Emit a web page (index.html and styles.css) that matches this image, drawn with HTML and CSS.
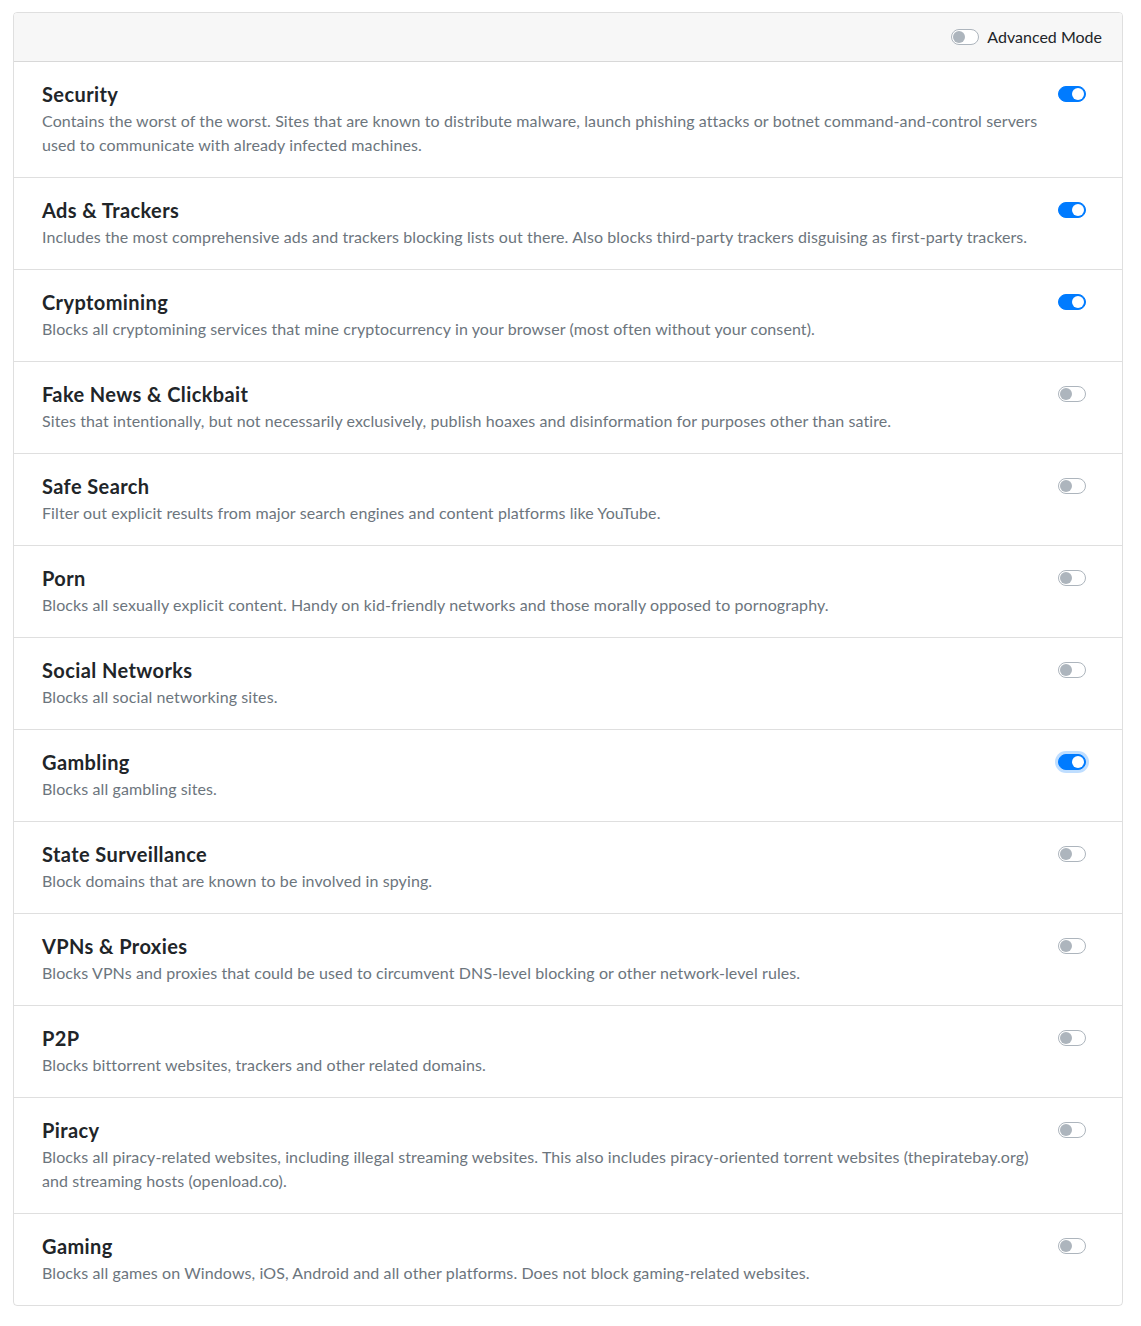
FILE: index.html
```html
<!DOCTYPE html>
<html>
<head>
<meta charset="utf-8">
<link rel="stylesheet" href="styles.css">
</head>
<body>
<div class="page">
  <div class="card">
    <div class="card-header">
      <span class="switch"></span>
      <span class="adv-label">Advanced Mode</span>
    </div>
    <div class="row">
      <div class="text">
        <div class="title">Security</div>
        <div class="desc">Contains the worst of the worst. Sites that are known to distribute malware, launch phishing attacks or botnet command-and-control servers used to communicate with already infected machines.</div>
      </div>
      <span class="switch on"></span>
    </div>
    <div class="row">
      <div class="text">
        <div class="title">Ads &amp; Trackers</div>
        <div class="desc">Includes the most comprehensive ads and trackers blocking lists out there. Also blocks third-party trackers disguising as first-party trackers.</div>
      </div>
      <span class="switch on"></span>
    </div>
    <div class="row">
      <div class="text">
        <div class="title">Cryptomining</div>
        <div class="desc">Blocks all cryptomining services that mine cryptocurrency in your browser (most often without your consent).</div>
      </div>
      <span class="switch on"></span>
    </div>
    <div class="row">
      <div class="text">
        <div class="title">Fake News &amp; Clickbait</div>
        <div class="desc">Sites that intentionally, but not necessarily exclusively, publish hoaxes and disinformation for purposes other than satire.</div>
      </div>
      <span class="switch"></span>
    </div>
    <div class="row">
      <div class="text">
        <div class="title">Safe Search</div>
        <div class="desc">Filter out explicit results from major search engines and content platforms like YouTube.</div>
      </div>
      <span class="switch"></span>
    </div>
    <div class="row">
      <div class="text">
        <div class="title">Porn</div>
        <div class="desc">Blocks all sexually explicit content. Handy on kid-friendly networks and those morally opposed to pornography.</div>
      </div>
      <span class="switch"></span>
    </div>
    <div class="row">
      <div class="text">
        <div class="title">Social Networks</div>
        <div class="desc">Blocks all social networking sites.</div>
      </div>
      <span class="switch"></span>
    </div>
    <div class="row">
      <div class="text">
        <div class="title">Gambling</div>
        <div class="desc">Blocks all gambling sites.</div>
      </div>
      <span class="switch on focus"></span>
    </div>
    <div class="row">
      <div class="text">
        <div class="title">State Surveillance</div>
        <div class="desc">Block domains that are known to be involved in spying.</div>
      </div>
      <span class="switch"></span>
    </div>
    <div class="row">
      <div class="text">
        <div class="title">VPNs &amp; Proxies</div>
        <div class="desc">Blocks VPNs and proxies that could be used to circumvent DNS-level blocking or other network-level rules.</div>
      </div>
      <span class="switch"></span>
    </div>
    <div class="row">
      <div class="text">
        <div class="title">P2P</div>
        <div class="desc">Blocks bittorrent websites, trackers and other related domains.</div>
      </div>
      <span class="switch"></span>
    </div>
    <div class="row">
      <div class="text">
        <div class="title">Piracy</div>
        <div class="desc">Blocks all piracy-related websites, including illegal streaming websites. This also includes piracy-oriented torrent websites (thepiratebay.org) and streaming hosts (openload.co).</div>
      </div>
      <span class="switch"></span>
    </div>
    <div class="row">
      <div class="text">
        <div class="title">Gaming</div>
        <div class="desc">Blocks all games on Windows, iOS, Android and all other platforms. Does not block gaming-related websites.</div>
      </div>
      <span class="switch"></span>
    </div>
  </div>
</div>
</body>
</html>
```
FILE: styles.css
```css
* { box-sizing: border-box; }
html, body { margin: 0; padding: 0; background: #fff; }
body {
  font-family: Lato, "Noto Sans", sans-serif;
  color: #212529;
  font-size: 16px;
  line-height: 24px;
}
.page {
  padding: 12px 18px 20px 13px;
}
.card {
  border: 1px solid rgba(0,0,0,0.125);
  border-radius: 4px;
  overflow: hidden;
}
.card-header {
  background: #f7f7f7;
  border-bottom: 1px solid rgba(0,0,0,0.125);
  padding: 12px 20px;
  display: flex;
  justify-content: flex-end;
  align-items: center;
  gap: 8px;
}
.adv-label { color: #212529; }
.row {
  display: flex;
  align-items: flex-start;
  padding: 20px 36px 20px 28px;
  border-bottom: 1px solid rgba(0,0,0,0.125);
}
.row:last-child { border-bottom: none; }
.text { flex: 1; min-width: 0; padding-right: 12px; }
.title {
  font-size: 20px;
  line-height: 24px;
  font-weight: 700;
  letter-spacing: 0.4px;
  color: #212529;
  margin-bottom: 3px;
}
.desc { color: #6c757d; letter-spacing: 0.1px; }
.switch {
  flex: none;
  position: relative;
  width: 28px;
  height: 16px;
  border: 1px solid #adb5bd;
  border-radius: 8px;
  background: #fff;
}
.row .switch { margin-top: 4px; }
.switch::after {
  content: "";
  position: absolute;
  top: 1px;
  left: 1px;
  width: 12px;
  height: 12px;
  border-radius: 50%;
  background: #adb5bd;
}
.switch.on {
  background: #007bff;
  border-color: #007bff;
}
.switch.on::after {
  left: 13px;
  background: #fff;
}
.switch.focus {
  box-shadow: 0 0 0 3px rgba(0,123,255,0.25);
}
```
